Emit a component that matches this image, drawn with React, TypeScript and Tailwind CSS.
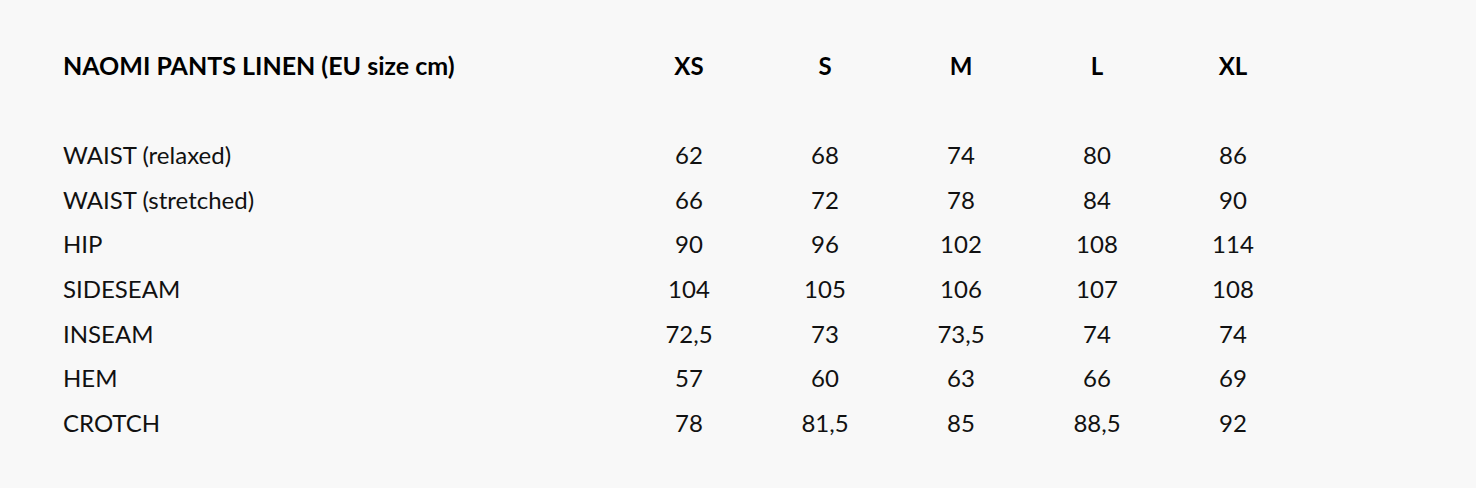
const sizes = ['XS', 'S', 'M', 'L', 'XL']

const rows: [string, string[]][] = [
  ['WAIST (relaxed)', ['62', '68', '74', '80', '86']],
  ['WAIST (stretched)', ['66', '72', '78', '84', '90']],
  ['HIP', ['90', '96', '102', '108', '114']],
  ['SIDESEAM', ['104', '105', '106', '107', '108']],
  ['INSEAM', ['72,5', '73', '73,5', '74', '74']],
  ['HEM', ['57', '60', '63', '66', '69']],
  ['CROTCH', ['78', '81,5', '85', '88,5', '92']],
]

export default function App() {
  return (
    <div className="w-[1476px] h-[488px] bg-[#f8f8f8] text-[#111] font-['Lato','Liberation_Sans',sans-serif] pl-[63px] pt-[43px]">
      <div className="flex h-[45px] leading-[45px] text-[25px] font-bold text-black mb-[45px]">
        <div className="w-[558px]">NAOMI PANTS LINEN (EU size cm)</div>
        {sizes.map((s) => (
          <div key={s} className="w-[136px] text-center text-[24px]">{s}</div>
        ))}
      </div>
      {rows.map(([label, vals]) => (
        <div key={label} className="flex h-[44.7px] leading-[44.7px] text-[24px]">
          <div className="w-[558px]">{label}</div>
          {vals.map((v, i) => (
            <div key={i} className="w-[136px] text-center">{v}</div>
          ))}
        </div>
      ))}
    </div>
  )
}
